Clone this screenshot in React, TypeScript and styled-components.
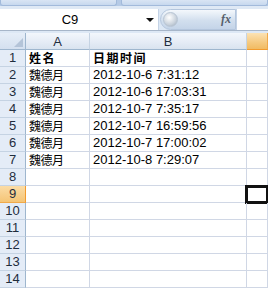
import React from 'react'
import styled, { createGlobalStyle } from 'styled-components'

const GlobalStyle = createGlobalStyle`
  html, body {
    margin: 0;
    padding: 0;
    background: #ffffff;
    overflow: hidden;
  }
  body {
    font-family: 'Liberation Sans', Arial, 'Noto Sans CJK SC', sans-serif;
  }
`

const ROWS: [string, string][] = [
  ['姓名', '日期时间'],
  ['魏德月', '2012-10-6 7:31:12'],
  ['魏德月', '2012-10-6 17:03:31'],
  ['魏德月', '2012-10-7 7:35:17'],
  ['魏德月', '2012-10-7 16:59:56'],
  ['魏德月', '2012-10-7 17:00:02'],
  ['魏德月', '2012-10-8 7:29:07'],
]

const TOTAL_ROWS = 14
const SELECTED_ROW = 9

const Window = styled.div`
  width: 268px;
  height: 290px;
  display: flex;
  flex-direction: column;
  background: #dde8f5;
  overflow: hidden;
`

const Ribbon = styled.div`
  flex-shrink: 0;
  display: flex;
  gap: 4px;
  height: 9px;
  background: #b5cae6;
  box-sizing: border-box;
  border-bottom: 3px solid #dfe9f5;
`

const RibbonPanel = styled.div<{ $width?: number }>`
  flex: ${({ $width }) => ($width ? `0 0 ${$width}px` : '1')};
  background: linear-gradient(#d9e5f4, #c7d8ee);
  border: 1px solid #a2badb;
  border-top: none;
  border-radius: 0 0 3px 3px;
`

const FormulaBar = styled.div`
  flex-shrink: 0;
  display: flex;
  align-items: stretch;
  height: 22px;
  border-bottom: 1px solid #a7b6c9;
  box-sizing: border-box;
`

const NameBox = styled.div`
  flex: 0 0 159px;
  position: relative;
  display: flex;
  align-items: center;
  justify-content: center;
  background: #ffffff;
  border-right: 1px solid #c4d3e6;
  font-size: 13px;
  color: #000;
  padding-right: 18px;
  box-sizing: border-box;
`

const DropArrow = styled.span`
  position: absolute;
  right: 4px;
  top: 9px;
  width: 0;
  height: 0;
  border-left: 4px solid transparent;
  border-right: 4px solid transparent;
  border-top: 4px solid #111;
`

const FxButton = styled.div`
  flex: 0 0 76px;
  display: flex;
  align-items: center;
  justify-content: space-between;
  padding: 0 4px 0 2px;
  box-sizing: border-box;
  background: linear-gradient(#f4f8fc, #d2dfee 55%, #c4d4e8);
  border: 1px solid #b4c6dd;
  border-radius: 11px 0 0 11px;
  margin-left: 1px;
`

const Knob = styled.div`
  width: 13px;
  height: 13px;
  border-radius: 50%;
  background: radial-gradient(circle at 40% 35%, #ffffff, #c9d2dc 60%, #9aa8b8);
  border: 1px solid #b8c5d4;
`

const FxLabel = styled.span`
  font-family: 'Liberation Serif', 'Times New Roman', serif;
  font-style: italic;
  font-weight: bold;
  font-size: 12px;
  color: #555e6a;
`

const FormulaInput = styled.div`
  flex: 1;
  background: #ffffff;
  border-left: 1px solid #c4d3e6;
`

const Spacer = styled.div`
  flex-shrink: 0;
  height: 2px;
  background: #dde8f5;
`

const Sheet = styled.div`
  flex: 1 0 auto;
  display: grid;
  grid-template-columns: 26px 64px 157px 1fr;
  grid-auto-rows: 17px;
  background: #ffffff;
  align-content: start;
`

const Corner = styled.div`
  position: relative;
  background: linear-gradient(#e6eef8, #d4e0ef);
  border-right: 1px solid #9eb6ce;
  border-bottom: 1px solid #9eb6ce;
  box-sizing: border-box;

  &::after {
    content: '';
    position: absolute;
    right: 2px;
    bottom: 2px;
    width: 0;
    height: 0;
    border-left: 9px solid transparent;
    border-bottom: 9px solid #b4c4d8;
  }
`

const ColHeader = styled.div<{ $active?: boolean }>`
  display: flex;
  align-items: center;
  justify-content: center;
  font-size: 13px;
  color: #1f2d3d;
  box-sizing: border-box;
  background: ${({ $active }) =>
    $active ? 'linear-gradient(#fbe2b4, #f5c97f 60%, #f1bb62)' : 'linear-gradient(#f3f7fc, #e4ebf5 60%, #d9e3ef)'};
  border-right: 1px solid ${({ $active }) => ($active ? '#f0a94a' : '#c5d3e3')};
  border-bottom: 1px solid ${({ $active }) => ($active ? '#f29b2e' : '#9eb6ce')};
`

const RowHeader = styled.div<{ $active?: boolean }>`
  display: flex;
  align-items: flex-end;
  justify-content: center;
  padding-bottom: 1px;
  font-size: 13px;
  line-height: 14px;
  color: #1f2d3d;
  box-sizing: border-box;
  background: ${({ $active }) => ($active ? 'linear-gradient(#fbdca6, #f5c576)' : '#e4ecf7')};
  border-right: 1px solid ${({ $active }) => ($active ? '#f29b2e' : '#9eb6ce')};
  border-bottom: 1px solid ${({ $active }) => ($active ? '#f0a94a' : '#c5d3e3')};
`

const Cell = styled.div<{ $bold?: boolean; $cjk?: boolean; $selected?: boolean }>`
  display: flex;
  align-items: flex-end;
  padding: 0 0 1px 3px;
  box-sizing: border-box;
  white-space: nowrap;
  overflow: visible;
  font-family: ${({ $cjk }) =>
    $cjk ? "'Noto Sans CJK SC', sans-serif" : "'Liberation Sans', Arial, sans-serif"};
  font-size: ${({ $cjk }) => ($cjk ? '12px' : '13px')};
  line-height: 14px;
  font-weight: ${({ $bold }) => ($bold ? 'bold' : 'normal')};
  letter-spacing: ${({ $cjk, $bold }) => ($cjk ? ($bold ? '1.5px' : '-0.5px') : '0')};
  color: #000;
  border-right: 1px solid #d0d7e5;
  border-bottom: 1px solid #d0d7e5;
  ${({ $selected }) =>
    $selected &&
    `
    outline: 3px solid #111;
    outline-offset: -2px;
    margin-left: -1px;
  `}
`

const App: React.FC = () => {
  const rows = Array.from({ length: TOTAL_ROWS }, (_, i) => i + 1)

  return (
    <>
      <GlobalStyle />
      <Window>
        <Ribbon>
          <RibbonPanel $width={115} />
          <RibbonPanel />
        </Ribbon>
        <FormulaBar>
          <NameBox>
            C9
            <DropArrow />
          </NameBox>
          <FxButton>
            <Knob />
            <FxLabel>fx</FxLabel>
          </FxButton>
          <FormulaInput />
        </FormulaBar>
        <Spacer />
        <Sheet>
          <Corner />
          <ColHeader>A</ColHeader>
          <ColHeader>B</ColHeader>
          <ColHeader $active />
          {rows.map((r) => {
            const data = ROWS[r - 1]
            const header = r === 1
            return (
              <React.Fragment key={r}>
                <RowHeader $active={r === SELECTED_ROW}>{r}</RowHeader>
                <Cell $cjk $bold={header}>{data ? data[0] : ''}</Cell>
                <Cell $cjk={header} $bold={header}>{data ? data[1] : ''}</Cell>
                <Cell $selected={r === SELECTED_ROW} />
              </React.Fragment>
            )
          })}
        </Sheet>
      </Window>
    </>
  )
}

export default App
